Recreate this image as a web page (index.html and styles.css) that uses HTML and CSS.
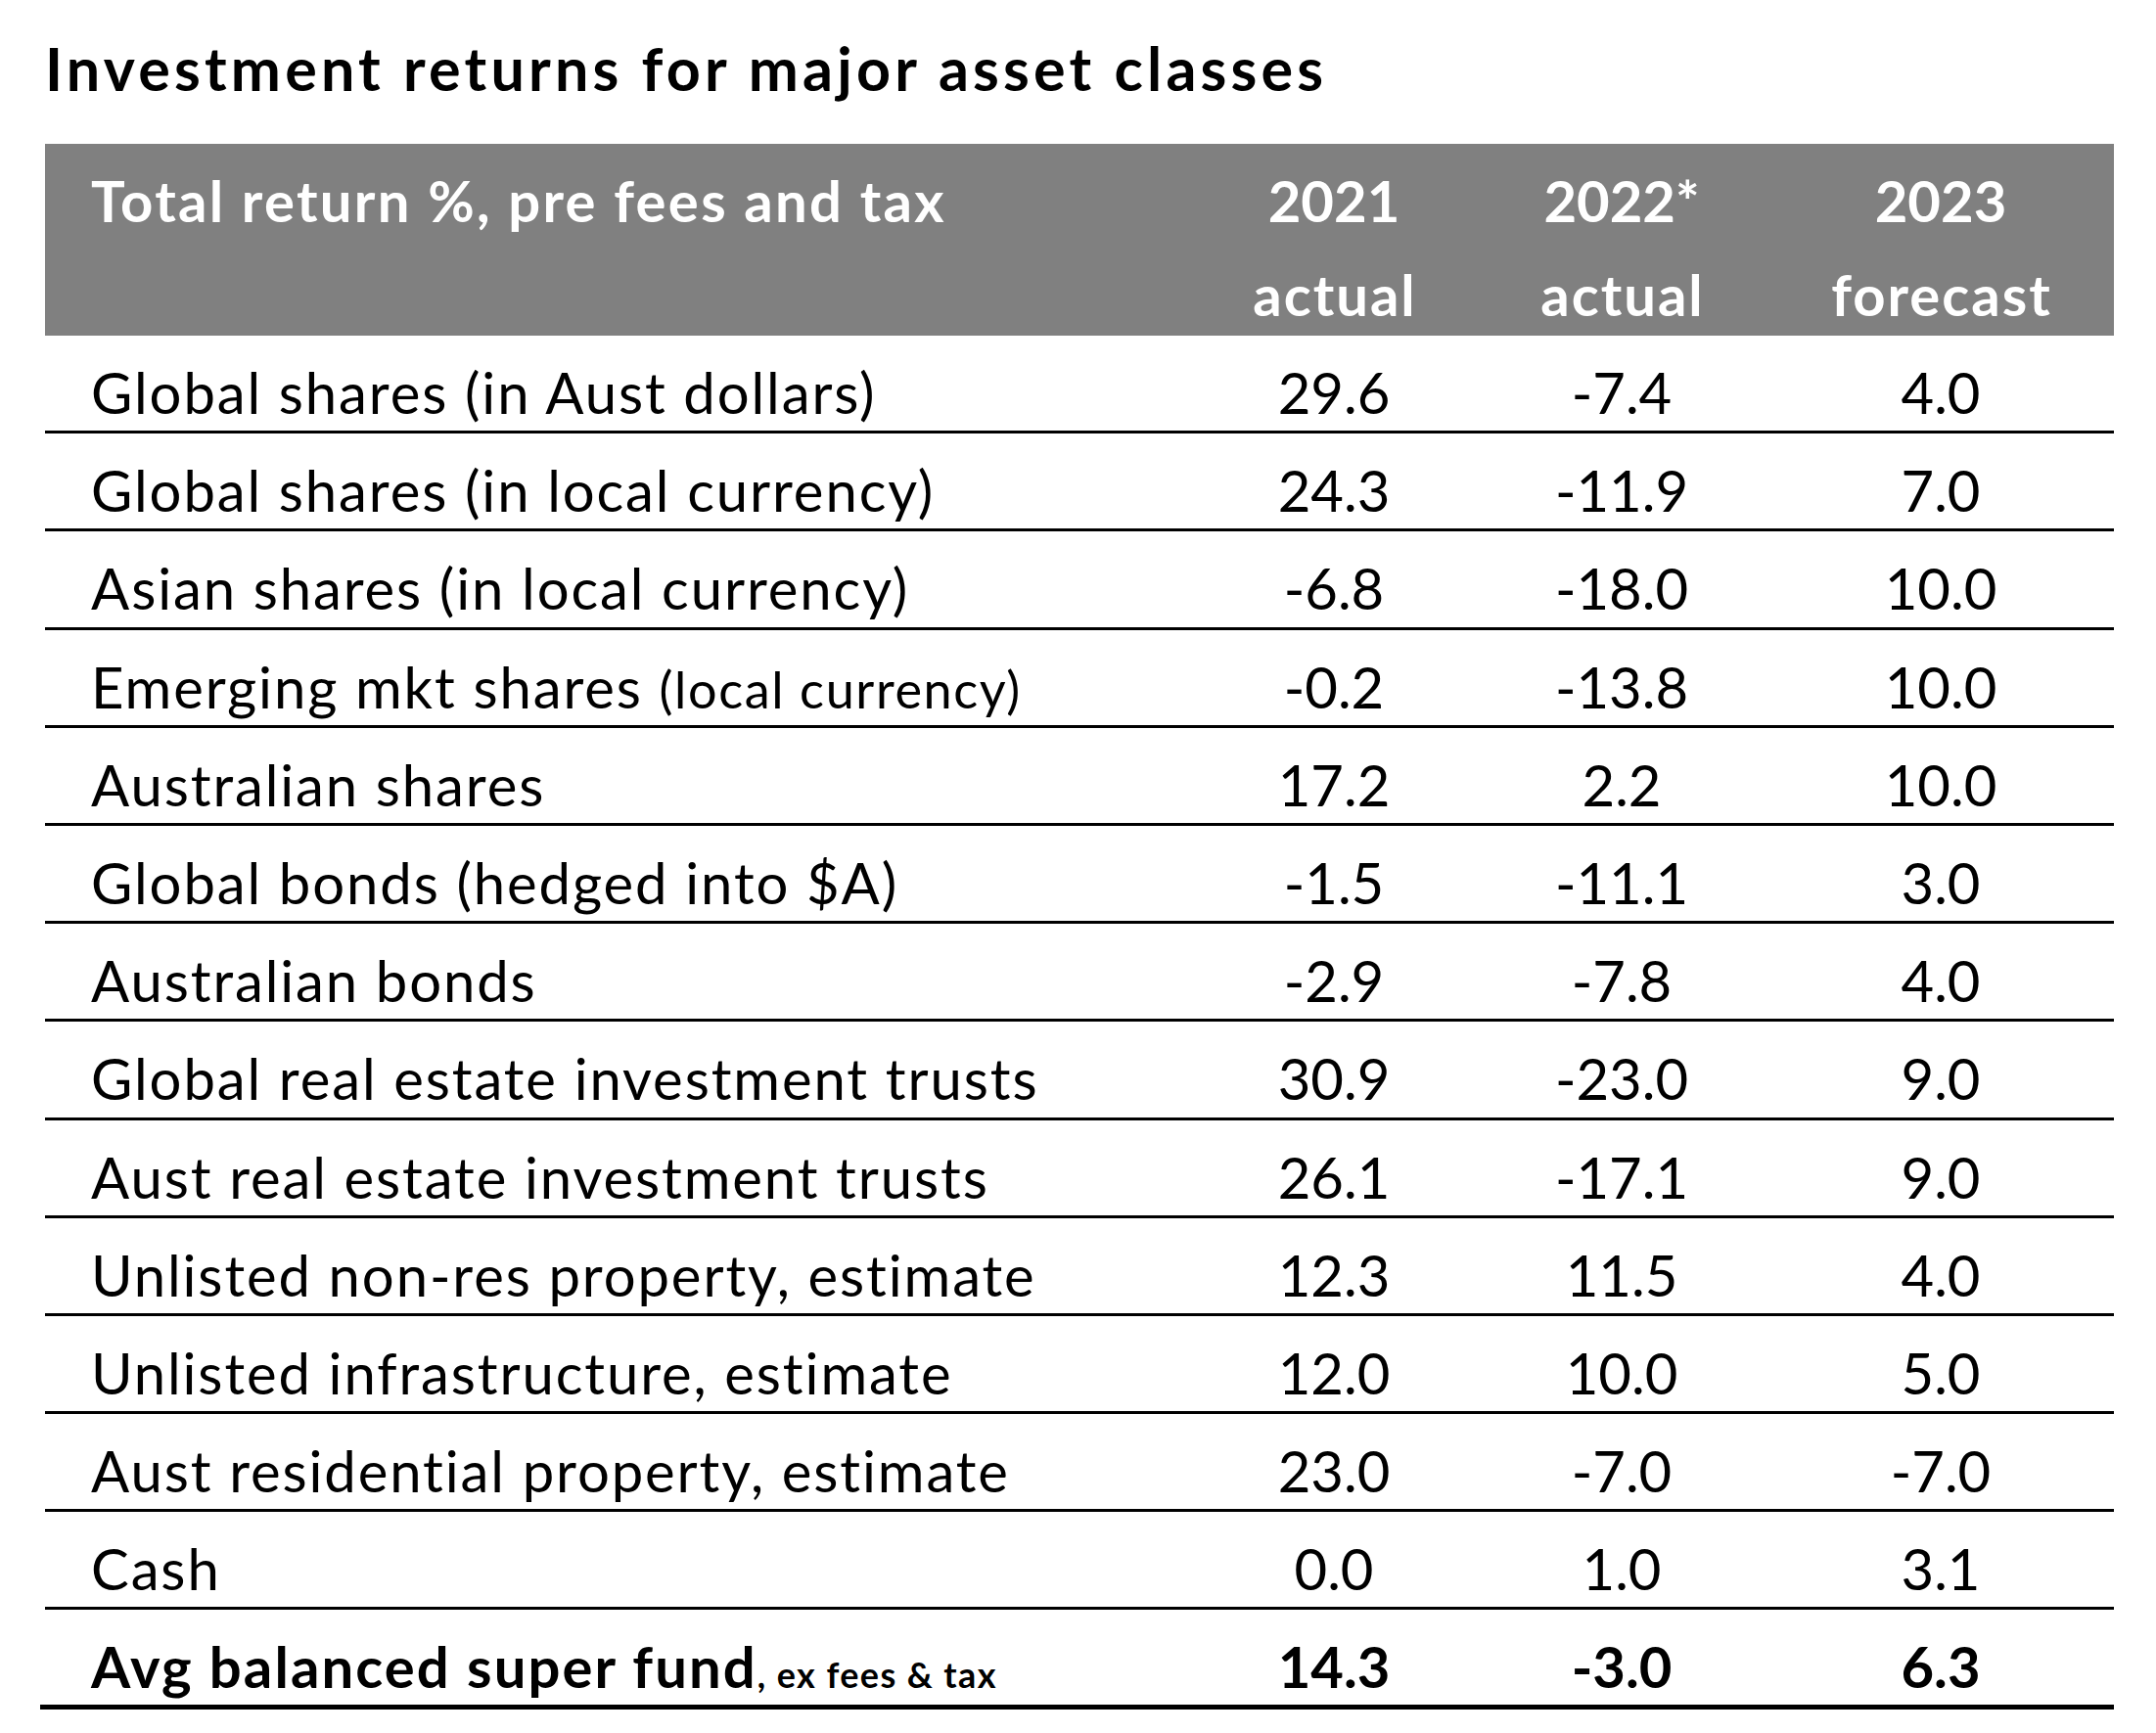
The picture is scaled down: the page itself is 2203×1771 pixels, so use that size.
FILE: index.html
```html
<!DOCTYPE html>
<html lang="en">
<head>
<meta charset="utf-8">
<title>Investment returns for major asset classes</title>
<link rel="stylesheet" href="styles.css">
</head>
<body>
<div class="page">
  <h1 class="title">Investment returns for major asset classes</h1>
  <div class="table">
    <div class="row head">
      <div class="label">Total return %, pre fees and tax</div>
      <div class="num">2021<br><span class="word">actual</span></div>
      <div class="num">2022*<br><span class="word">actual</span></div>
      <div class="num">2023<br><span class="word">forecast</span></div>
    </div>
    <div class="row"><div class="label">Global shares (in Aust dollars)</div><div class="num">29.6</div><div class="num">-7.4</div><div class="num">4.0</div></div>
    <div class="row"><div class="label">Global shares (in local currency)</div><div class="num">24.3</div><div class="num">-11.9</div><div class="num">7.0</div></div>
    <div class="row"><div class="label">Asian shares (in local currency)</div><div class="num">-6.8</div><div class="num">-18.0</div><div class="num">10.0</div></div>
    <div class="row"><div class="label">Emerging mkt shares <span class="small">(local currency)</span></div><div class="num">-0.2</div><div class="num">-13.8</div><div class="num">10.0</div></div>
    <div class="row"><div class="label">Australian shares</div><div class="num">17.2</div><div class="num">2.2</div><div class="num">10.0</div></div>
    <div class="row"><div class="label">Global bonds (hedged into $A)</div><div class="num">-1.5</div><div class="num">-11.1</div><div class="num">3.0</div></div>
    <div class="row"><div class="label">Australian bonds</div><div class="num">-2.9</div><div class="num">-7.8</div><div class="num">4.0</div></div>
    <div class="row"><div class="label">Global real estate investment trusts</div><div class="num">30.9</div><div class="num">-23.0</div><div class="num">9.0</div></div>
    <div class="row"><div class="label">Aust real estate investment trusts</div><div class="num">26.1</div><div class="num">-17.1</div><div class="num">9.0</div></div>
    <div class="row"><div class="label">Unlisted non-res property, estimate</div><div class="num">12.3</div><div class="num">11.5</div><div class="num">4.0</div></div>
    <div class="row"><div class="label">Unlisted infrastructure, estimate</div><div class="num">12.0</div><div class="num">10.0</div><div class="num">5.0</div></div>
    <div class="row"><div class="label">Aust residential property, estimate</div><div class="num">23.0</div><div class="num">-7.0</div><div class="num">-7.0</div></div>
    <div class="row"><div class="label">Cash</div><div class="num">0.0</div><div class="num">1.0</div><div class="num">3.1</div></div>
    <div class="row total"><div class="label">Avg balanced super fund<span class="tiny">, ex fees &amp; tax</span></div><div class="num">14.3</div><div class="num">-3.0</div><div class="num">6.3</div></div>
  </div>
</div>
</body>
</html>
```
FILE: styles.css
```css
html, body {
  margin: 0;
  padding: 0;
  background: #ffffff;
}
body {
  font-family: "Lato", "Carlito", "Open Sans", sans-serif;
  color: #000000;
}
.page {
  padding-left: 46px;
}
.title {
  margin: 35px 0 42px 0;
  font-size: 61px;
  line-height: 70px;
  font-weight: 700;
  letter-spacing: 4.2px;
  white-space: nowrap;
}
.table {
  width: 2114px;
  font-size: 58px;
}
.row {
  display: grid;
  grid-template-columns: 1172px 290px 298px 354px;
  box-sizing: border-box;
  height: 100.2px;
  padding-top: 18px;
  line-height: 79px;
  border-bottom: 3px solid #000000;
  white-space: nowrap;
}
.label {
  padding-left: 47px;
  letter-spacing: 1.9px;
}
.num {
  text-align: center;
}
.head {
  background: #808080;
  color: #ffffff;
  font-weight: 700;
  height: 196px;
  padding-top: 10px;
  line-height: 96px;
  border-bottom: none;
}
.head .label {
  letter-spacing: 2.3px;
}
.word {
  letter-spacing: 2px;
  margin-right: -2px;
}
.small {
  font-size: 0.9em;
  letter-spacing: 1.6px;
}
.total {
  font-weight: 700;
  margin-left: -5px;
  grid-template-columns: 1177px 290px 298px 354px;
  border-bottom: 5px solid #000000;
  height: 102px;
}
.total .label {
  padding-left: 52px;
  letter-spacing: 2.1px;
}
.tiny {
  font-size: 0.62em;
  letter-spacing: 1.4px;
}
```
